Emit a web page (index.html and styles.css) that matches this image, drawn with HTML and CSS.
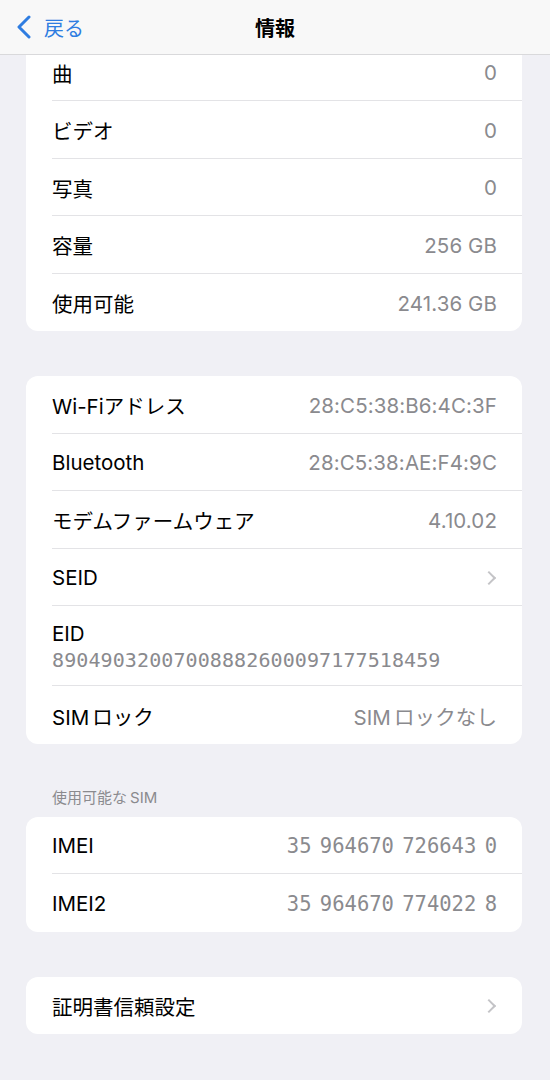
FILE: index.html
```html
<!DOCTYPE html>
<html lang="ja">
<head>
  <meta charset="UTF-8" />
  <meta name="viewport" content="width=device-width, initial-scale=1.0"/>
  <title>情報</title>
  <link rel="stylesheet" href="styles.css">
</head>
<body>
  <header class="nav-bar">
    <a class="back" href="#">
      <svg class="back-icon" width="16" height="24" viewBox="0 0 16 24">
        <path d="M13 2 L3 12 L13 22" fill="none" stroke="currentColor" stroke-width="3" stroke-linecap="round" stroke-linejoin="round"/>
      </svg>
      <span>戻る</span>
    </a>
    <h1 class="nav-title">情報</h1>
  </header>

  <main class="content">
    <section class="group">
      <div class="row"><span class="label">曲</span><span class="value">0</span></div>
      <div class="row"><span class="label">ビデオ</span><span class="value">0</span></div>
      <div class="row"><span class="label">写真</span><span class="value">0</span></div>
      <div class="row"><span class="label">容量</span><span class="value">256 GB</span></div>
      <div class="row"><span class="label">使用可能</span><span class="value">241.36 GB</span></div>
    </section>

    <section class="group">
      <div class="row"><span class="label">Wi-Fiアドレス</span><span class="value">28:C5:38:B6:4C:3F</span></div>
      <div class="row"><span class="label">Bluetooth</span><span class="value">28:C5:38:AE:F4:9C</span></div>
      <div class="row"><span class="label">モデムファームウェア</span><span class="value">4.10.02</span></div>
      <div class="row"><span class="label">SEID</span><span class="chevron"></span></div>
      <div class="row row-stack">
        <span class="label">EID</span>
        <span class="value mono">89049032007008882600097177518459</span>
      </div>
      <div class="row"><span class="label">SIM<span class="gap"></span>ロック</span><span class="value">SIM<span class="gap"></span>ロックなし</span></div>
    </section>

    <h2 class="group-title">使用可能な<span class="gap"></span>SIM</h2>
    <section class="group">
      <div class="row"><span class="label">IMEI</span><span class="value mono imei">35 964670 726643 0</span></div>
      <div class="row"><span class="label">IMEI2</span><span class="value mono imei">35 964670 774022 8</span></div>
    </section>

    <section class="group">
      <div class="row"><span class="label">証明書信頼設定</span><span class="chevron"></span></div>
    </section>
  </main>
</body>
</html>
```

FILE: styles.css
```css
* {
  box-sizing: border-box;
}

body {
  margin: 0;
  font-family: 'Inter', 'Noto Sans CJK JP', sans-serif;
  background-color: #f0f0f5;
  color: #000;
  min-height: 100vh;
}

.nav-bar {
  position: fixed;
  top: 0;
  left: 0;
  right: 0;
  height: 55px;
  background-color: #f8f8f8;
  border-bottom: 1px solid #d9d9db;
  display: flex;
  align-items: center;
  justify-content: center;
  z-index: 10;
}

.back {
  position: absolute;
  left: 16px;
  top: 0;
  height: 54px;
  display: flex;
  align-items: center;
  gap: 12px;
  color: #2f7de1;
  text-decoration: none;
  font-size: 20px;
}

.back-icon {
  margin-top: -1px;
}

.nav-title {
  margin: 0;
  font-size: 20px;
  font-weight: 700;
}

.content {
  padding: 43.5px 28px 40px 26px;
}

.group {
  background-color: #fff;
  border-radius: 12px;
  margin-bottom: 45px;
  overflow: hidden;
}

.group-title {
  margin: 0 0 10px 26px;
  font-size: 15px;
  font-weight: 400;
  color: #8a8a8e;
  line-height: 18px;
}

.gap {
  display: inline-block;
  width: 3px;
}

.row {
  height: 57.5px;
  margin-left: 26px;
  padding: 2px 25px 0 0;
  border-bottom: 1px solid #e3e3e6;
  display: flex;
  align-items: center;
  justify-content: space-between;
  font-size: 20.5px;
}

.row:last-child {
  border-bottom: none;
}

.label {
  color: #000;
}

.value {
  color: #8a8a8e;
  letter-spacing: 0.1px;
}

.row-stack {
  height: 80px;
  flex-direction: column;
  align-items: flex-start;
  justify-content: center;
  gap: 2px;
}

.mono {
  font-family: 'DejaVu Sans Mono', monospace;
  font-size: 20px;
  letter-spacing: 0.1px;
}

.imei {
  font-size: 20.5px;
  letter-spacing: 0;
  word-spacing: -4px;
}

.chevron {
  width: 10px;
  height: 10px;
  border-top: 2px solid #c4c4c7;
  border-right: 2px solid #c4c4c7;
  transform: rotate(45deg);
  margin-right: 3px;
}
```
